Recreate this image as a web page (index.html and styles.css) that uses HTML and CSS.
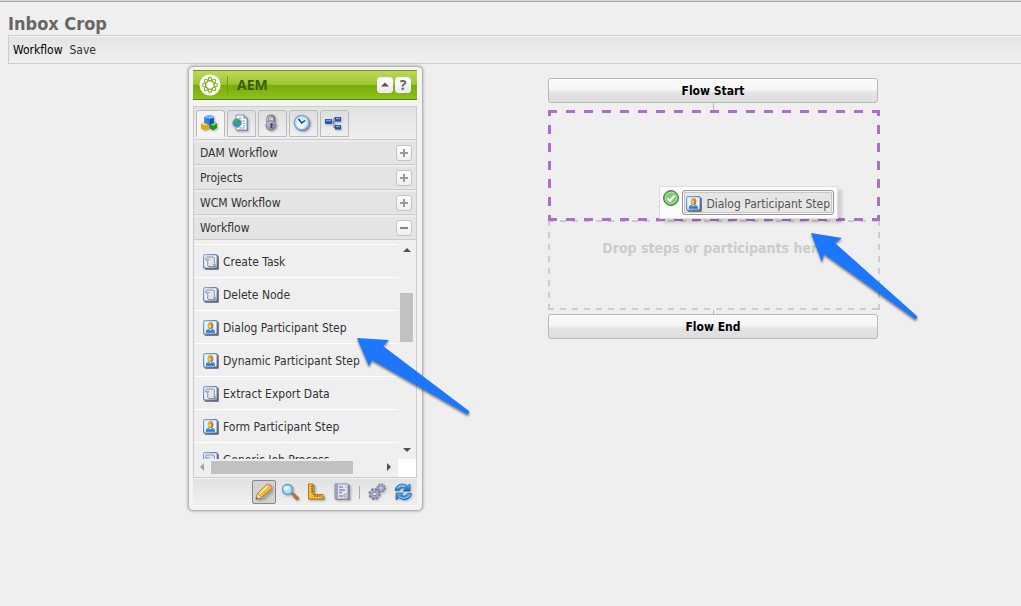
FILE: index.html
```html
<!DOCTYPE html>
<html lang="en">
<head>
<meta charset="utf-8">
<title>Inbox Crop</title>
<link rel="stylesheet" href="styles.css">
</head>
<body>
<svg class="defs" aria-hidden="true">
  <defs>
    <linearGradient id="frame" x1="0" y1="0" x2="1" y2="1"><stop offset="0" stop-color="#7fabe8"/><stop offset="1" stop-color="#45507c"/></linearGradient>
    <linearGradient id="skin" x1="0" y1="0" x2="1" y2="1"><stop offset="0" stop-color="#f4bd42"/><stop offset="1" stop-color="#a5620c"/></linearGradient>
    <linearGradient id="metal" x1="0" y1="0" x2="1" y2="1"><stop offset="0" stop-color="#d5d5e6"/><stop offset="1" stop-color="#6d6e91"/></linearGradient>
    <linearGradient id="blue" x1="0" y1="0" x2="0" y2="1"><stop offset="0" stop-color="#60b6f4"/><stop offset="1" stop-color="#1465bd"/></linearGradient>
    <linearGradient id="gold" x1="0" y1="0" x2="1" y2="1"><stop offset="0" stop-color="#ffe45c"/><stop offset="1" stop-color="#e39a18"/></linearGradient>
    <symbol id="script" viewBox="0 0 16 16">
      <rect x="1.5" y="1.5" width="14.500" height="14.500" rx="1.5" fill="#777b8c"/>
      <rect x=".6" y=".6" width="13.6" height="13.6" rx="1.5" fill="#edf4fb" stroke="url(#frame)" stroke-width="1.2"/>
      <path d="M3.500 3h6.500q2 .3 1.500 2-.5 1.500 0 3l1 4.500H6q-1.800-.3-1.500-2 .8-1.500 0-3L3 6q-1-2 .5-3z" fill="#e3e5e8" stroke="#8b9099"/>
      <path d="M3.500 5.800h3M10 10.300q1.800.2 2 2.200" fill="none" stroke="#8b9099"/>
    </symbol>
    <symbol id="person" viewBox="0 0 16 16">
      <rect x="1.500" y="1.500" width="14.500" height="14.500" rx="1.500" fill="#777b8c"/>
      <rect x=".6" y=".6" width="13.600" height="13.600" rx="1.500" fill="#e8f3fd" stroke="url(#frame)" stroke-width="1.200"/>
      <path d="M2.800 12.800q0-4 3-4.300h3q3.200.3 3.200 4.300z" fill="url(#blue)"/>
      <path d="M5.800 8.300l1.600 2.200 1.600-2.200z" fill="#fff"/>
      <ellipse cx="7.500" cy="5.500" rx="2.900" ry="3.500" fill="url(#skin)"/>
      <ellipse cx="6.800" cy="6.300" rx="1.400" ry="2" fill="#f7c568"/>
    </symbol>
  </defs>
</svg>

<header class="page-head">
  <h1 class="title">Inbox Crop</h1>
  <nav class="menu">
    <button class="menu-item" type="button">Workflow</button>
    <button class="menu-item menu-save" type="button">Save</button>
  </nav>
</header>

<main class="workspace">
  <section class="palette" aria-label="AEM">
    <div class="palette-head">
      <svg class="logo" viewBox="0 0 22 22" aria-hidden="true">
        <circle cx="11" cy="11" r="10.500" fill="#fff"/>
        <g fill="none" stroke="#82b321" stroke-width="1.100">
          <circle cx="11" cy="5.300" r="1.700"/><circle cx="15" cy="7" r="1.700"/><circle cx="16.700" cy="11" r="1.700"/><circle cx="15" cy="15" r="1.700"/>
          <circle cx="11" cy="16.700" r="1.700"/><circle cx="7" cy="15" r="1.700"/><circle cx="5.300" cy="11" r="1.700"/><circle cx="7" cy="7" r="1.700"/>
          <circle cx="11" cy="11" r="4.300"/>
        </g>
      </svg>
      <span class="brand">AEM</span>
      <button class="square" type="button" aria-label="Collapse"><svg width="14" height="14" viewBox="0 0 14 14"><path d="M3 8.500h8L7 4.500z" fill="#555"/></svg></button>
      <button class="square help" type="button">?</button>
    </div>

    <div class="palette-body">
      <div class="tabs">
        <button class="tab active" type="button" aria-label="Components">
          <svg class="icon" viewBox="0 0 18 18">
            <path d="M9 9l4-1.500 4 2v4.500l-4 2.500-4-2.500z" fill="#278c22"/><path d="M9 9l4-1.500 4 2-4 2.500z" fill="#6fdb60"/>
            <path d="M1 9.500L5.500 8 9.500 9.500v5l-4 2-4.500-2z" fill="#e2a513"/><path d="M1 9.500L5.500 8 9.500 9.500l-4 2z" fill="#ffe86b"/>
            <path d="M4.500 2.500L9.500 1 14 2.500v6.500L9.500 11 4.500 9z" fill="#1353b3"/><path d="M4.500 2.500L9.500 1 14 2.500v1.500L9.500 5 4.500 4z" fill="#78bcff"/><path d="M4.500 3.500L9.500 5v6l-5-2z" fill="#3483e2"/>
          </svg>
        </button>
        <button class="tab" type="button" aria-label="Pages">
          <svg class="icon" viewBox="0 0 18 18">
            <path d="M6 2h8l3 3v12H6z" fill="#71809b"/><path d="M5 1h8l3 3v12H5z" fill="#f7faff" stroke="#849ab9"/><path d="M13 1v3h3" fill="#c6d9f1" stroke="#637da2"/>
            <path d="M8 4h3M11 7h3M12 9.500h2M12 12h2M8 14h6" stroke="#91a2bd"/>
            <circle cx="6" cy="9" r="4.500" fill="#328bd6" stroke="#8cbfe4"/><path d="M3 6q3-2 4 0L6 8l2 1-2 3-2-3H2zM9 5l1.500 3-1 3-1-2z" fill="#4ea83f"/>
          </svg>
        </button>
        <button class="tab" type="button" aria-label="Locked">
          <svg class="icon" viewBox="0 0 18 18">
            <path d="M5.500 8V5q0-3.500 3.500-3.500t3.500 3.500v3" fill="none" stroke="#797b95" stroke-width="2.200"/><path d="M5.500 7V5q0-3 3-3.300" fill="none" stroke="#c9cadb"/>
            <ellipse cx="9" cy="11.500" rx="5" ry="4.800" fill="url(#metal)" stroke="#7c7e99"/><circle cx="9.500" cy="10.500" r="1.300" fill="#40425b"/><path d="M9 11h1l.5 3h-2z" fill="#40425b"/>
          </svg>
        </button>
        <button class="tab" type="button" aria-label="History">
          <svg class="icon" viewBox="0 0 18 18">
            <circle cx="9.500" cy="9.500" r="7.800" fill="#69738b"/><circle cx="8.700" cy="8.700" r="7.300" fill="#c1e8fc" stroke="#8ba3c3" stroke-width="1.500"/><circle cx="8" cy="10" r="4.500" fill="#e7f8ff"/><path d="M5.500 5l3.200 4L12 6.500" fill="none" stroke="#243852" stroke-width="1.300"/>
          </svg>
        </button>
        <button class="tab" type="button" aria-label="Workflow steps">
          <svg class="icon" viewBox="0 0 18 18">
            <path d="M7 8h3M10 4v10M10 4h3M10 13.500h3" fill="none" stroke="#60728e"/><rect x="1" y="5" width="7" height="5" fill="#2059b7"/><rect x="11" y="3" width="6" height="4.500" fill="#204fa5"/><rect x="11" y="11" width="6" height="4.500" fill="#204fa5"/><path d="M2 6.500h5M12 4.500h4M12 12.500h4" stroke="#6fa5f0" stroke-width="1.500"/>
          </svg>
        </button>
      </div>

      <div class="group"><span>DAM Workflow</span><button class="toggle plus" type="button" aria-label="Expand DAM Workflow"></button></div>
      <div class="group"><span>Projects</span><button class="toggle plus" type="button" aria-label="Expand Projects"></button></div>
      <div class="group"><span>WCM Workflow</span><button class="toggle plus" type="button" aria-label="Expand WCM Workflow"></button></div>
      <div class="group"><span>Workflow</span><button class="toggle" type="button" aria-label="Collapse Workflow"></button></div>

      <div class="scroller">
        <ul class="steps">
          <li class="step"><svg class="step-icon"><use href="#script"/></svg>Create Task</li>
          <li class="step"><svg class="step-icon"><use href="#script"/></svg>Delete Node</li>
          <li class="step"><svg class="step-icon"><use href="#person"/></svg>Dialog Participant Step</li>
          <li class="step"><svg class="step-icon"><use href="#person"/></svg>Dynamic Participant Step</li>
          <li class="step"><svg class="step-icon"><use href="#script"/></svg>Extract Export Data</li>
          <li class="step"><svg class="step-icon"><use href="#person"/></svg>Form Participant Step</li>
          <li class="step"><svg class="step-icon"><use href="#script"/></svg>Generic Job Process</li>
        </ul>
        <div class="vbar"><i class="arrow up"></i><i class="vthumb"></i><i class="arrow down"></i></div>
        <div class="hbar"><i class="arrow left"></i><i class="hthumb"></i><i class="arrow right"></i></div>
        <div class="corner"></div>
      </div>
    </div>

    <div class="tools">
      <button class="tool pressed" type="button" aria-label="Edit">
        <svg class="icon" viewBox="0 0 18 18"><path d="M2 16.500l8-1 8-9" fill="none" stroke="#8f8f8f" stroke-width="1.500" opacity=".6"/><path d="M1 16l1.500-5.500L12 1.500q1.500-1 3.500.8t1 3.400L6.500 14.500z" fill="url(#gold)" stroke="#b87b18"/><path d="M1 16l1.500-5.500 4 4z" fill="#f8dfb5" stroke="#a7875a" stroke-width=".6"/><path d="M1 16l.6-2 1.400 1.400z" fill="#333"/><path d="M4.500 10.500l8-7.500" stroke="#fff2a2" stroke-width="1.500"/><path d="M12 1.800l4 4 1-1.500-3-3z" fill="#f0a180"/></svg>
      </button>
      <button class="tool" type="button" aria-label="Preview">
        <svg class="icon" viewBox="0 0 18 18"><path d="M12.500 12.500l4.500 4" stroke="#9a9a9a" stroke-width="3.500"/><path d="M11.500 10.500l5 5" stroke="#c66b21" stroke-width="3" stroke-linecap="round"/><path d="M9.500 9.500l2 2" stroke="#889" stroke-width="2"/><circle cx="6.500" cy="6.500" r="5" fill="#a5e3fa" stroke="#6f9bc4" stroke-width="1.500"/><ellipse cx="5.500" cy="5" rx="3" ry="2" fill="#dcf7ff"/></svg>
      </button>
      <button class="tool" type="button" aria-label="Design">
        <svg class="icon" viewBox="0 0 18 18"><path d="M3 2v15h14.500v-4H8V2z" fill="#999"/><path d="M1.500 1h4.500v10.500H16V16H1.500z" fill="#f2bd36" stroke="#b97812"/><path d="M4 3.500h2M4 6h2M4 8.500h2M8 12v2M10.500 12v2M13 12v2" stroke="#80550c"/></svg>
      </button>
      <button class="tool" type="button" aria-label="Scaffolding">
        <svg class="icon" viewBox="0 0 18 18"><path d="M3 2h14v15H3z" fill="#85879a"/><path d="M2 1h13v15H2z" fill="#e2e4f2" stroke="#8b8fae"/><path d="M2 1h3v15H2z" fill="#9da1c0"/><path d="M6 4h4M6 7h6M6 9.500h3M6 13h4" stroke="#8b90ad" stroke-width="1.500"/><path d="M12 4h2M11 11h3v3h-3z" stroke="#aab0c8" fill="#c7cbdc"/></svg>
      </button>
      <span class="divider"></span>
      <button class="tool" type="button" aria-label="Settings">
        <svg class="icon" viewBox="0 0 18 18"><g fill="#777998"><circle cx="6.500" cy="11" r="4.600"/><circle cx="13" cy="5" r="3.200"/></g><g fill="none" stroke="#7a7c9c"><circle cx="6.500" cy="11" r="5.200" stroke-width="1.700" stroke-dasharray="2.300 1.780"/><circle cx="13" cy="5" r="3.900" stroke-width="1.400" stroke-dasharray="1.800 1.260"/></g><g fill="none" stroke="#a5a7cc"><circle cx="6.500" cy="11" r="3" stroke-width="2.200"/><circle cx="13" cy="5" r="2.100" stroke-width="1.600"/></g><g fill="#f4f4fa"><circle cx="6.500" cy="11" r="1.300"/><circle cx="13" cy="5" r="1"/></g></svg>
      </button>
      <button class="tool" type="button" aria-label="Refresh">
        <svg class="icon" viewBox="0 0 18 18"><path d="M1 7.500Q2 1.500 8 1q3.500 0 5.500 2L16 1v7H9l2.300-2.500Q7 3.500 5 7.500z" fill="url(#blue)" stroke="#1763b4" stroke-width=".7"/><path d="M17.500 10.500q-1 5.500-7 6.300-3.500 0-5.500-2.300L2 17v-7h7.500L7 12.300q4 2.200 6.500-1.800z" fill="url(#blue)" stroke="#1763b4" stroke-width=".7"/><path d="M3 5.500Q6 1.500 11 3.200M5 13.500q5 4 10.500-1" fill="none" stroke="#a6dcff"/></svg>
      </button>
    </div>
  </section>

  <section class="flow" aria-label="Flow">
    <div class="bar">Flow Start</div>
    <i class="link link-top"></i>
    <div class="target">
      <div class="drag">
        <svg class="check" viewBox="0 0 16 16" aria-hidden="true"><circle cx="8" cy="8" r="7.500" fill="#55ad4c" stroke="#418f3b"/><circle cx="8" cy="8" r="5.800" fill="#80c975" stroke="#b5e2a9"/><path d="M4.500 8.200l2.500 2.500 4.500-5" fill="none" stroke="#fff" stroke-width="2.300"/></svg>
        <div class="drag-item"><svg class="step-icon"><use href="#person"/></svg>Dialog Participant Step</div>
      </div>
    </div>
    <div class="drop">Drop steps or participants here</div>
    <i class="link"></i>
    <div class="bar">Flow End</div>
  </section>
</main>

<svg class="pointer pointer-list" viewBox="0 0 116 82" aria-hidden="true"><path d="M1 1l32 2-6 6 86 65q1 3-2 3L16 23l-3 6z" fill="#1d77fc"/></svg>
<svg class="pointer pointer-drop" viewBox="0 0 112 92" aria-hidden="true"><path d="M1 1l31 5-7 5 82 73q1 3-2 3L14 22l-2 8z" fill="#1d77fc"/></svg>
</body>
</html>
```
FILE: styles.css
```css
* { box-sizing: border-box; }

body {
  margin: 0;
  min-height: 100vh;
  position: relative;
  background: #efefef;
  border-top: 1px solid #d8d8d8;
  box-shadow: inset 0 1px #a8a8a8;
  color: #333;
  font: 12px/16px "DejaVu Sans Condensed", "Noto Sans", sans-serif;
}

button {
  margin: 0;
  padding: 0;
  border: 0;
  background: none;
  color: inherit;
  font: inherit;
}

.defs { position: absolute; width: 0; height: 0; }
.icon { display: block; width: 18px; height: 18px; filter: drop-shadow(1px 1px 1px #0004); }

.page-head { padding: 12px 0 0 8px; }

.title {
  margin: 0;
  color: #666;
  font-weight: bold;
  font-size: 18px;
  line-height: 22px;
}

.menu {
  display: flex;
  align-items: center;
  gap: 7px;
  height: 29px;
  padding: 0 4px;
  border: 1px solid #ccc;
  border-right: 0;
  background: linear-gradient(#e3e3e3, #f0f0f0);
  box-shadow: inset 0 1px #f4f4f4;
}

.menu-item { color: #000; }
.menu-save { color: #333; }

.workspace {
  display: flex;
  align-items: flex-start;
  gap: 125px;
  padding: 2px 0 0 188px;
}

.palette {
  width: 235px;
  padding: 3px 5px 5px 4px;
  border: 1px solid #b5b5b5;
  border-radius: 5px;
  background: #f3f3f3;
  box-shadow: 0 0 3px #999;
}

.palette-head {
  display: flex;
  align-items: center;
  gap: 2px;
  height: 30px;
  margin-bottom: 6px;
  padding: 0 6px;
  border-top: 1px solid #6d9c13;
  border-bottom: 1px solid #568500;
  background: linear-gradient(#bfd65e, #9cc62e 48%, #77ac08 50%, #8fbf20);
}

.logo { width: 22px; height: 22px; }

.brand {
  flex: 1;
  margin-left: 4px;
  padding-left: 9px;
  border-left: 1px solid #719f18;
  color: #3c5c0a;
  font: bold 14px/18px "Noto Sans", sans-serif;
}

.square, .toggle {
  display: grid;
  place-items: center;
  flex: none;
  width: 16px;
  height: 16px;
  border: 1px solid #c4c4c4;
  border-radius: 3px;
  background: linear-gradient(#fff, #eaeaea);
  color: #666;
}

.square { border-color: #f4f4f4; }
.help { font: bold 14px/14px "Noto Sans", sans-serif; }

.palette-body { border: 1px solid #ccc; }

.tabs {
  display: flex;
  align-items: flex-end;
  gap: 2px;
  height: 33px;
  padding: 0 2px 2px;
  border-bottom: 1px solid #ccc;
  background: linear-gradient(#e2e2e2, #efefef);
  box-shadow: inset 0 -2px #efefef;
}

.tab {
  display: grid;
  place-items: center;
  width: 29px;
  height: 27px;
  padding: 0 4px 2px 0;
  border: 1px solid #bbb;
  border-radius: 3px 3px 0 0;
  background: linear-gradient(#dedede, #f0f0f0);
}

.tab.active { border-bottom-color: #f3f3f3; background: #f5f5f5; }

.group {
  display: flex;
  align-items: center;
  justify-content: space-between;
  min-height: 25px;
  padding: 2px 4px 0 6px;
  border-bottom: 1px solid #ccc;
  background: #e4e4e4;
  box-shadow: inset 0 2px #ededed;
}

.toggle {
  background:
    linear-gradient(#888, #888) center / 8px 2px no-repeat,
    linear-gradient(#fff, #eee);
}

.toggle.plus {
  background:
    linear-gradient(#999, #999) center / 8px 2px no-repeat,
    linear-gradient(#999, #999) center / 2px 8px no-repeat,
    linear-gradient(#fff, #eee);
}

.scroller {
  display: grid;
  grid-template: 219px 18px / 1fr 18px;
  background: #efefef;
}

.steps {
  overflow: hidden;
  margin: 0;
  padding: 4px 0 0;
  list-style: none;
}

.step {
  display: flex;
  align-items: center;
  gap: 4px;
  height: 33px;
  padding: 1px 0 0 9px;
  border-top: 1px solid #fff;
  white-space: nowrap;
}

.step-icon { flex: none; width: 16px; height: 16px; }

.vbar {
  display: flex;
  flex-direction: column;
  align-items: center;
  padding: 8px 1px 7px 0;
}

.vthumb { width: 13px; height: 49px; margin: 41px 0 auto; background: #c1c1c1; }

.hbar { display: flex; align-items: center; padding: 0 7px 2px 6px; }
.hthumb { width: 142px; height: 13px; margin: 0 auto 0 7px; background: #c1c1c1; }
.corner { background: #fff; }

.arrow { border: 4px solid transparent; }
.up { border-top: 0; border-bottom-color: #505050; }
.down { border-bottom: 0; border-top-color: #505050; }
.left { border-left: 0; border-right-color: #a3a3a3; }
.right { border-right: 0; border-left-color: #505050; }

.tools {
  display: flex;
  align-items: center;
  justify-content: flex-end;
  gap: 2px;
  height: 26px;
  margin-top: 1px;
  padding-right: 2px;
  background: linear-gradient(#e2e2e2, #f0f0f0);
}

.tool { display: grid; place-items: center; width: 24px; height: 24px; }
.tool.pressed { border: 1px solid #888; border-radius: 2px; background: #d2d2d2; }
.divider { width: 1px; height: 13px; margin: 0 3px; background: #aaa; }

.flow { width: 332px; padding-top: 12px; }

.bar {
  width: 330px;
  height: 25px;
  border: 1px solid #b8b8b8;
  border-radius: 3px;
  background: linear-gradient(#fafafa, #f6f6f6 45%, #e3e3e3 60%, #dedede);
  color: #000;
  font-weight: bold;
  line-height: 25px;
  text-align: center;
}

.link { display: block; width: 1px; height: 4px; margin-left: 165px; background: #b5b5b5; }
.link-top { height: 7px; }

.target {
  --dash: #ab6ec9 0 9px, transparent 9px 18px;
  position: relative;
  z-index: 1;
  height: 111px;
  background:
    repeating-linear-gradient(90deg, var(--dash)) 0 0 / 100% 3px no-repeat,
    repeating-linear-gradient(90deg, var(--dash)) 0 100% / 100% 3px no-repeat,
    linear-gradient(#ab6ec9 50%, transparent 50%) 0 -3px / 3px 18px repeat-y,
    linear-gradient(#ab6ec9 50%, transparent 50%) 100% -3px / 3px 18px repeat-y;
}

.drop {
  --dash: #ccc 0 6px, transparent 6px 12px;
  height: 90px;
  margin-top: -1px;
  padding-top: 18px;
  background:
    repeating-linear-gradient(90deg, var(--dash)) 0 0 / 100% 2px no-repeat,
    repeating-linear-gradient(90deg, var(--dash)) 0 100% / 100% 2px no-repeat,
    repeating-linear-gradient(var(--dash)) 0 0 / 2px 100% no-repeat,
    repeating-linear-gradient(var(--dash)) 100% 0 / 2px 100% no-repeat;
  color: #ccc;
  font-weight: bold;
  font-size: 14px;
  line-height: 20px;
  text-align: center;
}

.drag {
  position: absolute;
  right: 42px;
  bottom: 2px;
  display: flex;
  gap: 3px;
  padding: 3px;
  border: 1px solid #ddd;
  background: #fbfbfb;
  box-shadow: 4px 4px 3px #0002;
  color: #555;
}

.check { width: 16px; height: 16px; }

.drag-item {
  display: flex;
  align-items: center;
  gap: 4px;
  height: 25px;
  padding: 2px 3px 0;
  border: 1px solid #999;
  border-radius: 3px;
  background: #e6e6e6;
  box-shadow: inset 0 0 0 1px #f3f3f3, inset 0 0 0 2px #c8c8c8;
  white-space: nowrap;
}

.pointer { position: absolute; z-index: 2; filter: drop-shadow(0 2px 1px #0007); }
.pointer-list { left: 356px; top: 336px; width: 116px; height: 82px; }
.pointer-drop { left: 810px; top: 231px; width: 112px; height: 92px; }
```
